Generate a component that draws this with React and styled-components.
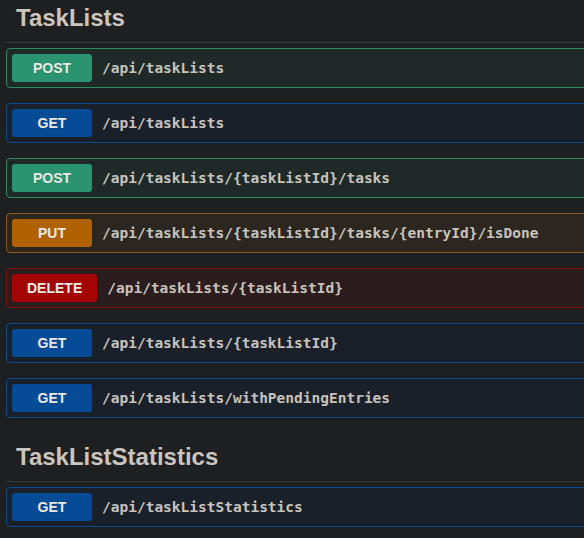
import React from "react";
import styled, { createGlobalStyle } from "styled-components";

const Global = createGlobalStyle`
  html, body {
    margin: 0;
    padding: 0;
    background: #1e1f21;
    overflow: hidden;
  }
  body {
    font-family: "Liberation Sans", Arial, sans-serif;
  }
`;

const Viewport = styled.div`
  width: 100%;
  height: 538px;
  overflow: hidden;
`;

const Page = styled.div`
  width: 620px;
  margin-top: -6px;
  padding-left: 6px;
  display: flex;
  flex-direction: column;
`;

const Section = styled.section`
  display: flex;
  flex-direction: column;
`;

const TagHeading = styled.h3`
  margin: 0 0 5px;
  padding: 10px 20px 10px 10px;
  font-family: "Liberation Sans", Arial, sans-serif;
  font-size: 24px;
  font-weight: 700;
  line-height: 28px;
  color: #cac5be;
  border-bottom: 1px solid #37393b;
`;

const palette = {
  POST: { badge: "#2a9470", border: "#2a8c60", bg: "#1f2a28" },
  GET: { badge: "#054b96", border: "#0c4b8e", bg: "#1a202a" },
  PUT: { badge: "#b06200", border: "#8f5a14", bg: "#2b2620" },
  DELETE: { badge: "#a50404", border: "#8d0d0d", bg: "#2b1c1e" },
};

const OpBlock = styled.div`
  display: flex;
  align-items: center;
  margin: 0 0 15px;
  padding: 5px;
  border: 1px solid ${(p) => palette[p.$method].border};
  border-radius: 4px;
  background: ${(p) => palette[p.$method].bg};
`;

const Method = styled.span`
  min-width: 80px;
  box-sizing: border-box;
  padding: 6px 15px;
  border-radius: 3px;
  background: ${(p) => palette[p.$method].badge};
  color: #ebe9e6;
  font-family: "Liberation Sans", Arial, sans-serif;
  font-size: 14px;
  font-weight: 700;
  line-height: 16px;
  text-align: center;
  text-shadow: 0 1px 0 rgba(0, 0, 0, 0.1);
`;

const Path = styled.span`
  padding: 0 10px;
  font-family: "DejaVu Sans Mono", "Liberation Mono", monospace;
  font-size: 14.5px;
  font-weight: 700;
  color: #c8c3bc;
  white-space: nowrap;
`;

const sections = [
  {
    tag: "TaskLists",
    ops: [
      ["POST", "/api/taskLists"],
      ["GET", "/api/taskLists"],
      ["POST", "/api/taskLists/{taskListId}/tasks"],
      ["PUT", "/api/taskLists/{taskListId}/tasks/{entryId}/isDone"],
      ["DELETE", "/api/taskLists/{taskListId}"],
      ["GET", "/api/taskLists/{taskListId}"],
      ["GET", "/api/taskLists/withPendingEntries"],
    ],
  },
  {
    tag: "TaskListStatistics",
    ops: [["GET", "/api/taskListStatistics"]],
  },
];

export default function App() {
  return (
    <>
      <Global />
      <Viewport>
        <Page>
          {sections.map((s) => (
            <Section key={s.tag}>
              <TagHeading>{s.tag}</TagHeading>
              {s.ops.map(([m, p], i) => (
                <OpBlock key={i} $method={m}>
                  <Method $method={m}>{m}</Method>
                  <Path>{p}</Path>
                </OpBlock>
              ))}
            </Section>
          ))}
        </Page>
      </Viewport>
    </>
  );
}
